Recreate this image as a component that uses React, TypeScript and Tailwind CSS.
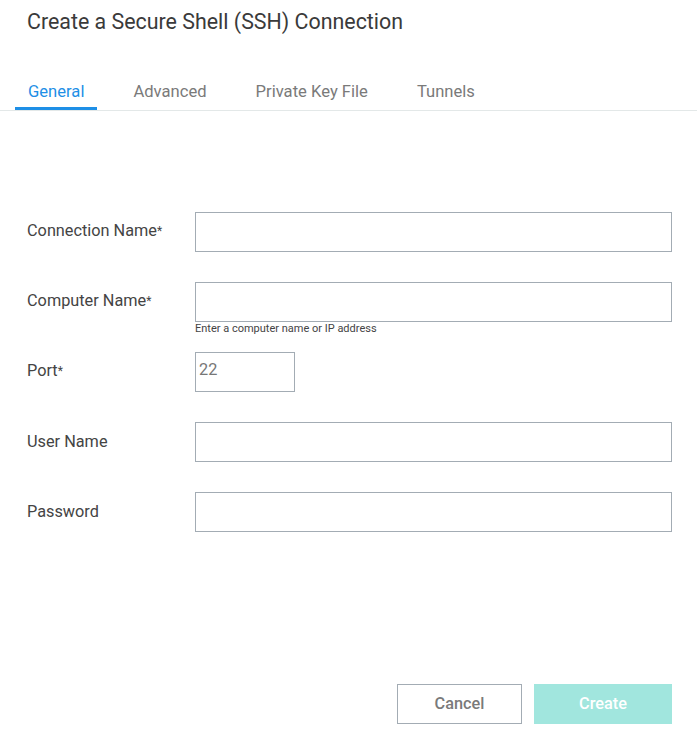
import React from "react";

const TABS = ["General", "Advanced", "Private Key File", "Tunnels"];

const FIELDS = [
  { label: "Connection Name", required: true },
  { label: "Computer Name", required: true, hint: "Enter a computer name or IP address" },
  { label: "Port", required: true, value: "22", short: true },
  { label: "User Name" },
  { label: "Password", password: true },
];

export default function App() {
  return (
    <div className="w-[697px] h-[736px] bg-white flex flex-col text-[#333] font-['Roboto',sans-serif]">
      {/* Title */}
      <h1 className="pl-[27px] pt-[8px] text-[21.4px] leading-[28px] text-[#3a3a3a]">
        Create a Secure Shell (SSH) Connection
      </h1>

      {/* Tabs */}
      <div className="mt-[44px] flex gap-[23px] pl-[15px] border-b border-[#e3e8e8]">
        {TABS.map((t, i) => (
          <div
            key={t}
            className={
              i === 0
                ? "px-[13px] pb-[3px] text-[16.6px] leading-[24px] text-[#1e8fe6] border-b-[3px] border-[#1e8fe6]"
                : "px-[13px] pb-[3px] text-[16.6px] leading-[24px] text-[#7a7a7a] border-b-[3px] border-transparent"
            }
          >
            {t}
          </div>
        ))}
      </div>

      {/* Form */}
      <div className="mt-[101px] flex flex-col gap-[30px] pl-[27px] pr-[25px]">
        {FIELDS.map((f) => (
          <div key={f.label} className="relative flex items-center">
            <label className="w-[168px] text-[16.3px] leading-[20px] text-[#444] -mt-[1px]">
              {f.label}
              {f.required && <span className="text-[12px] relative -top-[1px]">*</span>}
            </label>
            <input
              type={f.password ? "password" : "text"}
              defaultValue={f.value}
              className={
                (f.short ? "w-[100px]" : "flex-1") +
                " h-[40px] border border-[#a3acb4] pl-[3px] pb-[5px] text-[16.3px] text-[#777] outline-none"
              }
            />
            {f.hint && (
              <div className="absolute left-[168px] top-[40px] text-[11px] leading-[13px] text-[#444]">
                {f.hint}
              </div>
            )}
          </div>
        ))}
      </div>

      {/* Footer */}
      <div className="mt-auto mb-[12px] flex justify-end gap-[12px] pr-[25px]">
        <button className="w-[125px] h-[40px] border border-[#a3acb4] bg-white text-[16.3px] font-medium text-[#7a7a7a]">
          Cancel
        </button>
        <button className="w-[138px] h-[40px] bg-[#a1e6de] text-[16.3px] font-medium text-white">
          Create
        </button>
      </div>
    </div>
  );
}
